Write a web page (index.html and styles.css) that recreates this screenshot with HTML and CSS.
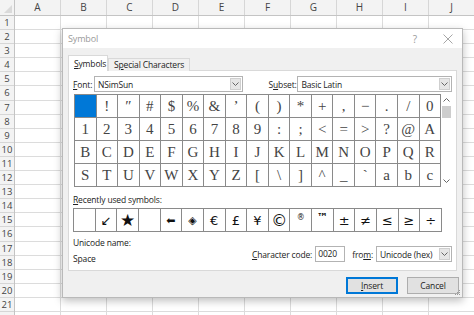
FILE: index.html
```html
<!DOCTYPE html>
<html lang="en">
<head>
  <meta charset="UTF-8" />
  <title>Symbol</title>
  <link rel="stylesheet" href="styles.css">
</head>
<body>
  <div class="sheet">
    <div class="col-heads">
      <div class="corner"></div>
      <div class="col-head">A</div>
      <div class="col-head">B</div>
      <div class="col-head">C</div>
      <div class="col-head">D</div>
      <div class="col-head">E</div>
      <div class="col-head">F</div>
      <div class="col-head">G</div>
      <div class="col-head">H</div>
      <div class="col-head">I</div>
      <div class="col-head">J</div>
    </div>
    <div class="sheet-body">
      <div class="row-heads">
        <div class="row-head">1</div>
        <div class="row-head">2</div>
        <div class="row-head">3</div>
        <div class="row-head">4</div>
        <div class="row-head">5</div>
        <div class="row-head">6</div>
        <div class="row-head">7</div>
        <div class="row-head">8</div>
        <div class="row-head">9</div>
        <div class="row-head">10</div>
        <div class="row-head">11</div>
        <div class="row-head">12</div>
        <div class="row-head">13</div>
        <div class="row-head">14</div>
        <div class="row-head">15</div>
        <div class="row-head">16</div>
        <div class="row-head">17</div>
        <div class="row-head">18</div>
        <div class="row-head">19</div>
        <div class="row-head">20</div>
        <div class="row-head">21</div>
      </div>
      <div class="cells"></div>
    </div>
  </div>

  <div class="dialog">
    <div class="title-bar">
      <span class="title">Symbol</span>
      <span class="title-help">?</span>
      <svg class="title-close" width="10" height="10" viewBox="0 0 10 10">
        <path d="M0.5 0.5 L9.5 9.5 M9.5 0.5 L0.5 9.5" stroke="#a6a6a6" stroke-width="1" fill="none"/>
      </svg>
    </div>

    <div class="tabs">
      <div class="tab active"><u>S</u>ymbols</div>
      <div class="tab">S<u>p</u>ecial Characters</div>
    </div>

    <div class="panel">
      <div class="font-row">
        <span class="font-label"><u>F</u>ont:</span>
        <div class="select font-select">
          <span class="select-value">NSimSun</span>
          <span class="select-arrow">
            <svg width="7" height="4" viewBox="0 0 7 4"><path d="M0.5 0.5 L3.5 3.5 L6.5 0.5" stroke="#666" fill="none"/></svg>
          </span>
        </div>
        <span class="subset-label">S<u>u</u>bset:</span>
        <div class="select subset-select">
          <span class="select-value">Basic Latin</span>
          <span class="select-arrow">
            <svg width="7" height="4" viewBox="0 0 7 4"><path d="M0.5 0.5 L3.5 3.5 L6.5 0.5" stroke="#666" fill="none"/></svg>
          </span>
        </div>
      </div>

      <div class="symbol-box">
        <div class="symbol-grid">
          <div class="sym selected"></div>
          <div class="sym">!</div>
          <div class="sym">″</div>
          <div class="sym">#</div>
          <div class="sym">$</div>
          <div class="sym">%</div>
          <div class="sym">&amp;</div>
          <div class="sym">’</div>
          <div class="sym">(</div>
          <div class="sym">)</div>
          <div class="sym">*</div>
          <div class="sym">+</div>
          <div class="sym">,</div>
          <div class="sym">−</div>
          <div class="sym">.</div>
          <div class="sym">/</div>
          <div class="sym">0</div>

          <div class="sym">1</div>
          <div class="sym">2</div>
          <div class="sym">3</div>
          <div class="sym">4</div>
          <div class="sym">5</div>
          <div class="sym">6</div>
          <div class="sym">7</div>
          <div class="sym">8</div>
          <div class="sym">9</div>
          <div class="sym">:</div>
          <div class="sym">;</div>
          <div class="sym">&lt;</div>
          <div class="sym">=</div>
          <div class="sym">&gt;</div>
          <div class="sym">?</div>
          <div class="sym">@</div>
          <div class="sym">A</div>

          <div class="sym">B</div>
          <div class="sym">C</div>
          <div class="sym">D</div>
          <div class="sym">E</div>
          <div class="sym">F</div>
          <div class="sym">G</div>
          <div class="sym">H</div>
          <div class="sym">I</div>
          <div class="sym">J</div>
          <div class="sym">K</div>
          <div class="sym">L</div>
          <div class="sym">M</div>
          <div class="sym">N</div>
          <div class="sym">O</div>
          <div class="sym">P</div>
          <div class="sym">Q</div>
          <div class="sym">R</div>

          <div class="sym">S</div>
          <div class="sym">T</div>
          <div class="sym">U</div>
          <div class="sym">V</div>
          <div class="sym">W</div>
          <div class="sym">X</div>
          <div class="sym">Y</div>
          <div class="sym">Z</div>
          <div class="sym">[</div>
          <div class="sym">\</div>
          <div class="sym">]</div>
          <div class="sym">^</div>
          <div class="sym">_</div>
          <div class="sym">`</div>
          <div class="sym">a</div>
          <div class="sym">b</div>
          <div class="sym">c</div>
        </div>
        <div class="scrollbar">
          <svg class="scroll-arrow" width="7" height="4" viewBox="0 0 7 4"><path d="M0.5 3.5 L3.5 0.5 L6.5 3.5" stroke="#666" fill="none"/></svg>
          <div class="scroll-thumb"></div>
          <svg class="scroll-arrow down" width="7" height="4" viewBox="0 0 7 4"><path d="M0.5 0.5 L3.5 3.5 L6.5 0.5" stroke="#666" fill="none"/></svg>
        </div>
      </div>

      <div class="section-label"><u>R</u>ecently used symbols:</div>
      <div class="recent-grid">
        <div class="recent"></div>
        <div class="recent">↙</div>
        <div class="recent star">★</div>
        <div class="recent"></div>
        <div class="recent small">⬅</div>
        <div class="recent small">◈</div>
        <div class="recent">€</div>
        <div class="recent">£</div>
        <div class="recent">¥</div>
        <div class="recent big">©</div>
        <div class="recent sup">®</div>
        <div class="recent sup tm">™</div>
        <div class="recent">±</div>
        <div class="recent">≠</div>
        <div class="recent">≤</div>
        <div class="recent">≥</div>
        <div class="recent">÷</div>
      </div>

      <div class="info-row">
        <div class="unicode-info">
          <div class="info-line">Unicode name:</div>
          <div class="info-line unicode-value">Space</div>
        </div>
        <div class="code-fields">
          <span class="code-label"><u>C</u>haracter code:</span>
          <div class="code-input">0020</div>
          <span class="from-label">fro<u>m</u>:</span>
          <div class="select from-select">
            <span class="select-value">Unicode (hex)</span>
            <span class="select-arrow">
              <svg width="7" height="4" viewBox="0 0 7 4"><path d="M0.5 0.5 L3.5 3.5 L6.5 0.5" stroke="#666" fill="none"/></svg>
            </span>
          </div>
        </div>
      </div>
    </div>

    <div class="footer">
      <button class="btn default" type="button"><u>I</u>nsert</button>
      <button class="btn" type="button">Cancel</button>
      <svg class="grip" width="7" height="7" viewBox="0 0 7 7">
        <rect x="5" y="1" width="1" height="1" fill="#999"/>
        <rect x="3" y="3" width="1" height="1" fill="#999"/>
        <rect x="5" y="3" width="1" height="1" fill="#999"/>
        <rect x="1" y="5" width="1" height="1" fill="#999"/>
        <rect x="3" y="5" width="1" height="1" fill="#999"/>
        <rect x="5" y="5" width="1" height="1" fill="#999"/>
      </svg>
    </div>
  </div>
</body>
</html>
```

FILE: styles.css
```css
* {
  box-sizing: border-box;
}

body {
  margin: 0;
  width: 474px;
  height: 315px;
  overflow: hidden;
  position: relative;
  background: #fff;
  font-family: "Open Sans", "Noto Sans", sans-serif;
  color: #222;
}

/* spreadsheet behind the dialog */

.sheet {
  display: flex;
  flex-direction: column;
  height: 100%;
}

.col-heads {
  display: flex;
  height: 16px;
  flex: none;
  background: #f3f3f3;
  border-bottom: 1px solid #c4c4c4;
}

.corner {
  width: 15px;
  flex: none;
  border-right: 1px solid #c4c4c4;
  position: relative;
}

.corner::after {
  content: "";
  position: absolute;
  right: 2px;
  bottom: 2px;
  border-left: 8px solid transparent;
  border-bottom: 8px solid #dadada;
}

.col-head {
  width: 46px;
  flex: none;
  border-right: 1px solid #d6d6d6;
  font-size: 10px;
  line-height: 15px;
  text-align: center;
  color: #444;
}

.sheet-body {
  display: flex;
  flex: 1;
}

.row-heads {
  width: 15px;
  flex: none;
  background: #f3f3f3;
  border-right: 1px solid #c4c4c4;
}

.row-head {
  height: 14.1px;
  border-bottom: 1px solid #d6d6d6;
  font-size: 9.5px;
  line-height: 13px;
  text-align: center;
  color: #444;
}

.cells {
  flex: 1;
  background:
    repeating-linear-gradient(to right, transparent 0 45px, #dcdcdc 45px 46px),
    repeating-linear-gradient(to bottom, transparent 0 13.1px, #dcdcdc 13.1px 14.1px);
}

/* dialog */

.dialog {
  position: absolute;
  left: 62px;
  top: 28px;
  width: 401px;
  height: 270px;
  display: flex;
  flex-direction: column;
  background: #f0f0f0;
  border: 1px solid #b9b9b9;
  box-shadow: 0 3px 8px rgba(0, 0, 0, 0.25);
  font-size: 8.5px;
  letter-spacing: -0.15px;
}

.title-bar {
  height: 19px;
  flex: none;
  display: flex;
  align-items: center;
  background: #fff;
  padding-left: 5px;
  color: #9a9a9a;
}

.title {
  font-size: 9px;
  flex: 1;
}

.title-help {
  font-size: 10px;
  margin-right: 26px;
}

.title-close {
  margin-right: 9px;
}

.tabs {
  display: flex;
  align-items: flex-end;
  margin: 7px 0 -1px 5px;
  height: 16px;
  flex: none;
  position: relative;
}

.tab {
  height: 13px;
  padding: 0 5px;
  line-height: 12px;
  border: 1px solid #d9d9d9;
  border-bottom: none;
  background: #f0f0f0;
  color: #222;
}

.tab.active {
  height: 16px;
  width: 40px;
  line-height: 15px;
  background: #fff;
  z-index: 1;
}

.panel {
  height: 201px;
  flex: none;
  margin: 0 5px;
  padding: 5px 4px 0 4px;
  background: #fff;
  border: 1px solid #d9d9d9;
  display: flex;
  flex-direction: column;
}

.font-row {
  display: flex;
  align-items: center;
  height: 16px;
}

.font-label {
  width: 21px;
}

.subset-label {
  width: 29px;
  margin-left: 26px;
}

.select {
  height: 16px;
  display: flex;
  align-items: center;
  border: 1px solid #b3b3b3;
  background: #fff;
  padding: 1px;
}

.select-value {
  flex: 1;
  padding-left: 2px;
  white-space: nowrap;
}

.select-arrow {
  width: 11px;
  height: 100%;
  display: flex;
  align-items: center;
  justify-content: center;
  background: #e6e6e6;
  border: 1px solid #cfcfcf;
}

.font-select {
  width: 149px;
}

.subset-select {
  width: 155px;
}

.symbol-box {
  display: flex;
  margin: 2px 0 0 1px;
  height: 93px;
}

.symbol-grid {
  width: 368px;
  display: grid;
  grid-template-columns: repeat(17, 1fr);
  grid-template-rows: repeat(4, 1fr);
  gap: 1px;
  padding: 1px;
  background: #8a8a8a;
}

.sym {
  background: #fff;
  display: flex;
  align-items: center;
  justify-content: center;
  font-family: "Liberation Serif", serif;
  font-size: 15px;
  letter-spacing: 0;
  color: #444;
}

.sym.selected {
  background: #0078d7;
}

.scrollbar {
  width: 11px;
  display: flex;
  flex-direction: column;
  align-items: center;
  padding-top: 4px;
  padding-bottom: 4px;
}

.scroll-thumb {
  width: 9px;
  height: 12px;
  margin-top: 4px;
  background: #cdcdcd;
}

.scroll-arrow.down {
  margin-top: auto;
}

.section-label {
  margin-top: 7px;
  line-height: 12px;
}

.recent-grid {
  margin-top: 2px;
  width: 369px;
  height: 24px;
  display: grid;
  grid-template-columns: repeat(17, 1fr);
  gap: 1px;
  padding: 1px;
  background: #8a8a8a;
}

.recent {
  background: #fff;
  display: flex;
  align-items: center;
  justify-content: center;
  font-family: "DejaVu Sans", sans-serif;
  font-size: 13px;
  letter-spacing: 0;
  color: #111;
}

.recent.star {
  font-size: 17px;
}

.recent.small {
  font-size: 11px;
}

.recent.big {
  font-size: 16px;
}

.recent.sup {
  font-size: 8px;
  align-items: flex-start;
  padding-top: 4px;
}

.recent.tm {
  font-size: 11px;
  font-weight: bold;
  padding-top: 2px;
}

.info-row {
  display: flex;
  margin-top: 5px;
}

.info-line {
  line-height: 12px;
}

.unicode-value {
  margin-top: 4px;
}

.code-fields {
  margin-left: auto;
  margin-top: 9px;
  display: flex;
  align-items: center;
  height: 16px;
}

.code-input {
  width: 30px;
  height: 16px;
  margin-left: 3px;
  padding-left: 2px;
  line-height: 14px;
  border: 1px solid #b3b3b3;
}

.from-label {
  margin-left: 7px;
}

.from-select {
  width: 76px;
  margin-left: 3px;
}

.footer {
  flex: 1;
  display: flex;
  justify-content: flex-end;
  align-items: flex-start;
  gap: 9px;
  padding: 6px 3px 0 0;
  position: relative;
}

.btn {
  width: 52px;
  height: 17px;
  padding: 0;
  font-family: inherit;
  font-size: 8.5px;
  letter-spacing: -0.15px;
  color: #222;
  background: #e1e1e1;
  border: 1px solid #adadad;
}

.btn.default {
  border-color: #0078d7;
  box-shadow: inset 0 0 0 1px #0078d7;
}

.grip {
  position: absolute;
  right: 1px;
  bottom: 1px;
}
```
